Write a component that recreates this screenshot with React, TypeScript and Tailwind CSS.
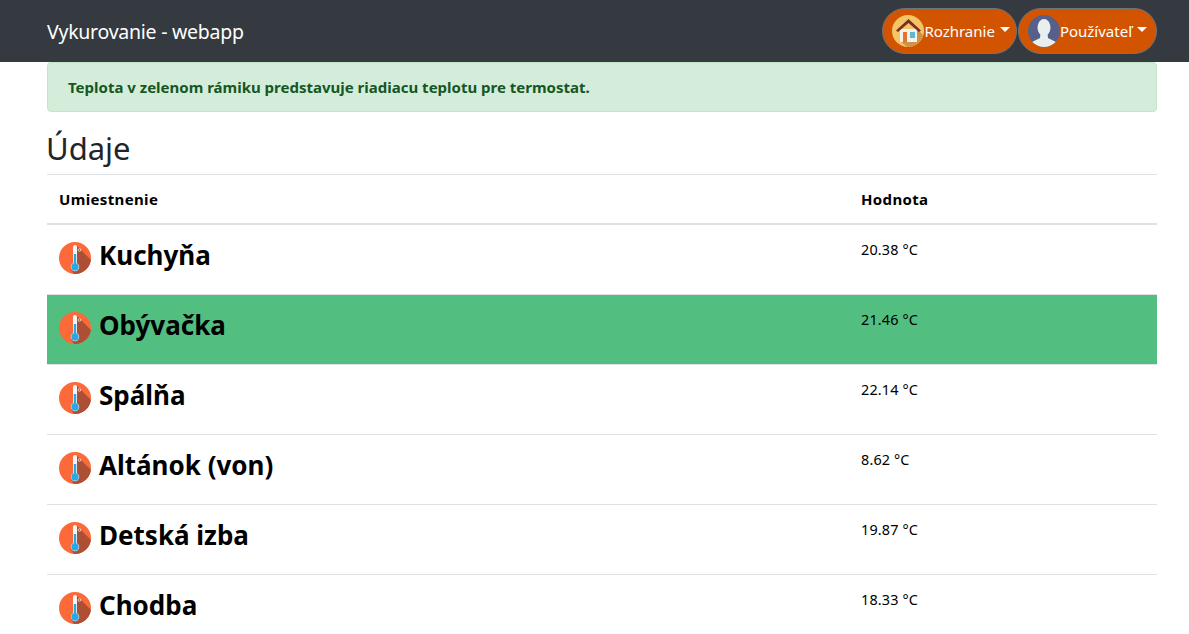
const rows = [
  { name: "Kuchyňa", value: "20.38 °C" },
  { name: "Obývačka", value: "21.46 °C", active: true },
  { name: "Spálňa", value: "22.14 °C" },
  { name: "Altánok (von)", value: "8.62 °C" },
  { name: "Detská izba", value: "19.87 °C" },
  { name: "Chodba", value: "18.33 °C" },
];

const ThermoIcon = () => (
  <svg viewBox="0 0 32 32" className="w-8 h-8 shrink-0 mt-[5px]">
    <defs>
      <clipPath id="thermo-clip">
        <circle cx="16" cy="16" r="16" />
      </clipPath>
    </defs>
    <circle cx="16" cy="16" r="16" fill="#fd6a3a" />
    <path d="M18 4 L36 22 L36 36 L18 36 L12 28 Z" fill="#ad4f35" clipPath="url(#thermo-clip)" />
    <rect x="14" y="3" width="4" height="22" rx="2" fill="#f6f6f6" />
    <circle cx="16" cy="25" r="4.2" fill="#f6f6f6" />
    <circle cx="16" cy="25" r="3.7" fill="#2aa8e4" />
    <rect x="14.8" y="12" width="2.4" height="12" fill="#2aa8e4" />
    <circle cx="20.5" cy="8" r="1.3" fill="none" stroke="#f1d6cc" strokeWidth="0.9" />
  </svg>
);

const HomeIcon = () => (
  <svg viewBox="0 0 32 32" className="w-8 h-8 shrink-0">
    <defs>
      <clipPath id="home-clip">
        <circle cx="16" cy="16" r="16" />
      </clipPath>
    </defs>
    <circle cx="16" cy="16" r="16" fill="#f3c566" />
    <path d="M25 14 L36 25 L20 36 L8 26 Z" fill="#cf9246" clipPath="url(#home-clip)" />
    <rect x="8" y="14" width="17" height="13" fill="#f4f1ea" />
    <path d="M16.5 4 L29 15.5 L27 17 L16.5 8 L6 17 L4 15.5 Z" fill="#7d2e22" />
    <rect x="11" y="17" width="4" height="10" fill="#e2742b" />
    <rect x="18" y="17" width="5" height="6" fill="#5fb8cf" />
  </svg>
);

const UserIcon = () => (
  <svg viewBox="0 0 32 32" className="w-8 h-8 shrink-0">
    <defs>
      <clipPath id="user-clip">
        <circle cx="16" cy="16" r="16" />
      </clipPath>
    </defs>
    <circle cx="16" cy="16" r="16" fill="#56608a" />
    <g clipPath="url(#user-clip)" fill="#e9eeee">
      <ellipse cx="16" cy="12.5" rx="6.5" ry="8.5" />
      <path d="M12.5 18 L19.5 18 L20 23 L28 27 L28 33 L4 33 L4 27 L12 23 Z" />
    </g>
  </svg>
);

const NavPill = ({ label, icon }: { label: string; icon: React.ReactNode }) => (
  <button className="flex items-center h-[46px] pl-[9px] pr-[6px] last:pr-[9px] rounded-full bg-[#d35400] border border-[#6c757d] text-white text-[15px]">
    {icon}
    <span>{label}</span>
    <span className="ml-[5px] mb-[4px] border-x-[5px] border-x-transparent border-t-[5px] border-t-white" />
  </button>
);

export default function App() {
  return (
    <div className="font-['Noto_Sans',sans-serif] text-[#212529] h-[634px] overflow-hidden bg-white">
      <nav className="h-[62px] bg-[#343a40] flex items-center justify-between pl-[47px] pr-[32px]">
        <span className="text-white text-[19.5px] tracking-[-0.25px] pt-px">Vykurovanie - webapp</span>
        <div className="flex gap-px">
          <NavPill label="Rozhranie" icon={<HomeIcon />} />
          <NavPill label="Používateľ" icon={<UserIcon />} />
        </div>
      </nav>
      <main className="mx-[47px] w-[1110px]">
        <div className="h-[50px] flex items-center px-5 bg-[#d4edda] border border-[#c3e6cb] rounded text-[#155724] text-[15px] font-bold">
          Teplota v zelenom rámiku predstavuje riadiacu teplotu pre termostat.
        </div>
        <h2 className="text-[31px] leading-[36px] mt-[18px] mb-[8px] -ml-px">Údaje</h2>
        <table className="w-full border-collapse text-black">
          <thead>
            <tr className="border-t border-b-2 border-[#dee2e6] h-[49px] text-left text-[15px] font-bold tracking-[0.35px]">
              <th className="pl-3 pt-px w-[802px]">Umiestnenie</th>
              <th className="pl-3 pt-px">Hodnota</th>
            </tr>
          </thead>
          <tbody>
            {rows.map((row) => (
              <tr key={row.name} className={`h-[70px] first:h-[71px] border-b border-[#dee2e6] align-top ${row.active ? "bg-[#52bf80]" : ""}`}>
                <td className="pl-3 pt-[12px]">
                  <div className="flex items-start gap-2 text-[26px] leading-[36px] font-bold">
                    <ThermoIcon />
                    {row.name}
                  </div>
                </td>
                <td className="pl-3 pt-[13px] text-[14.4px] leading-[24px] tracking-[0.15px]">{row.value}</td>
              </tr>
            ))}
          </tbody>
        </table>
      </main>
    </div>
  );
}
